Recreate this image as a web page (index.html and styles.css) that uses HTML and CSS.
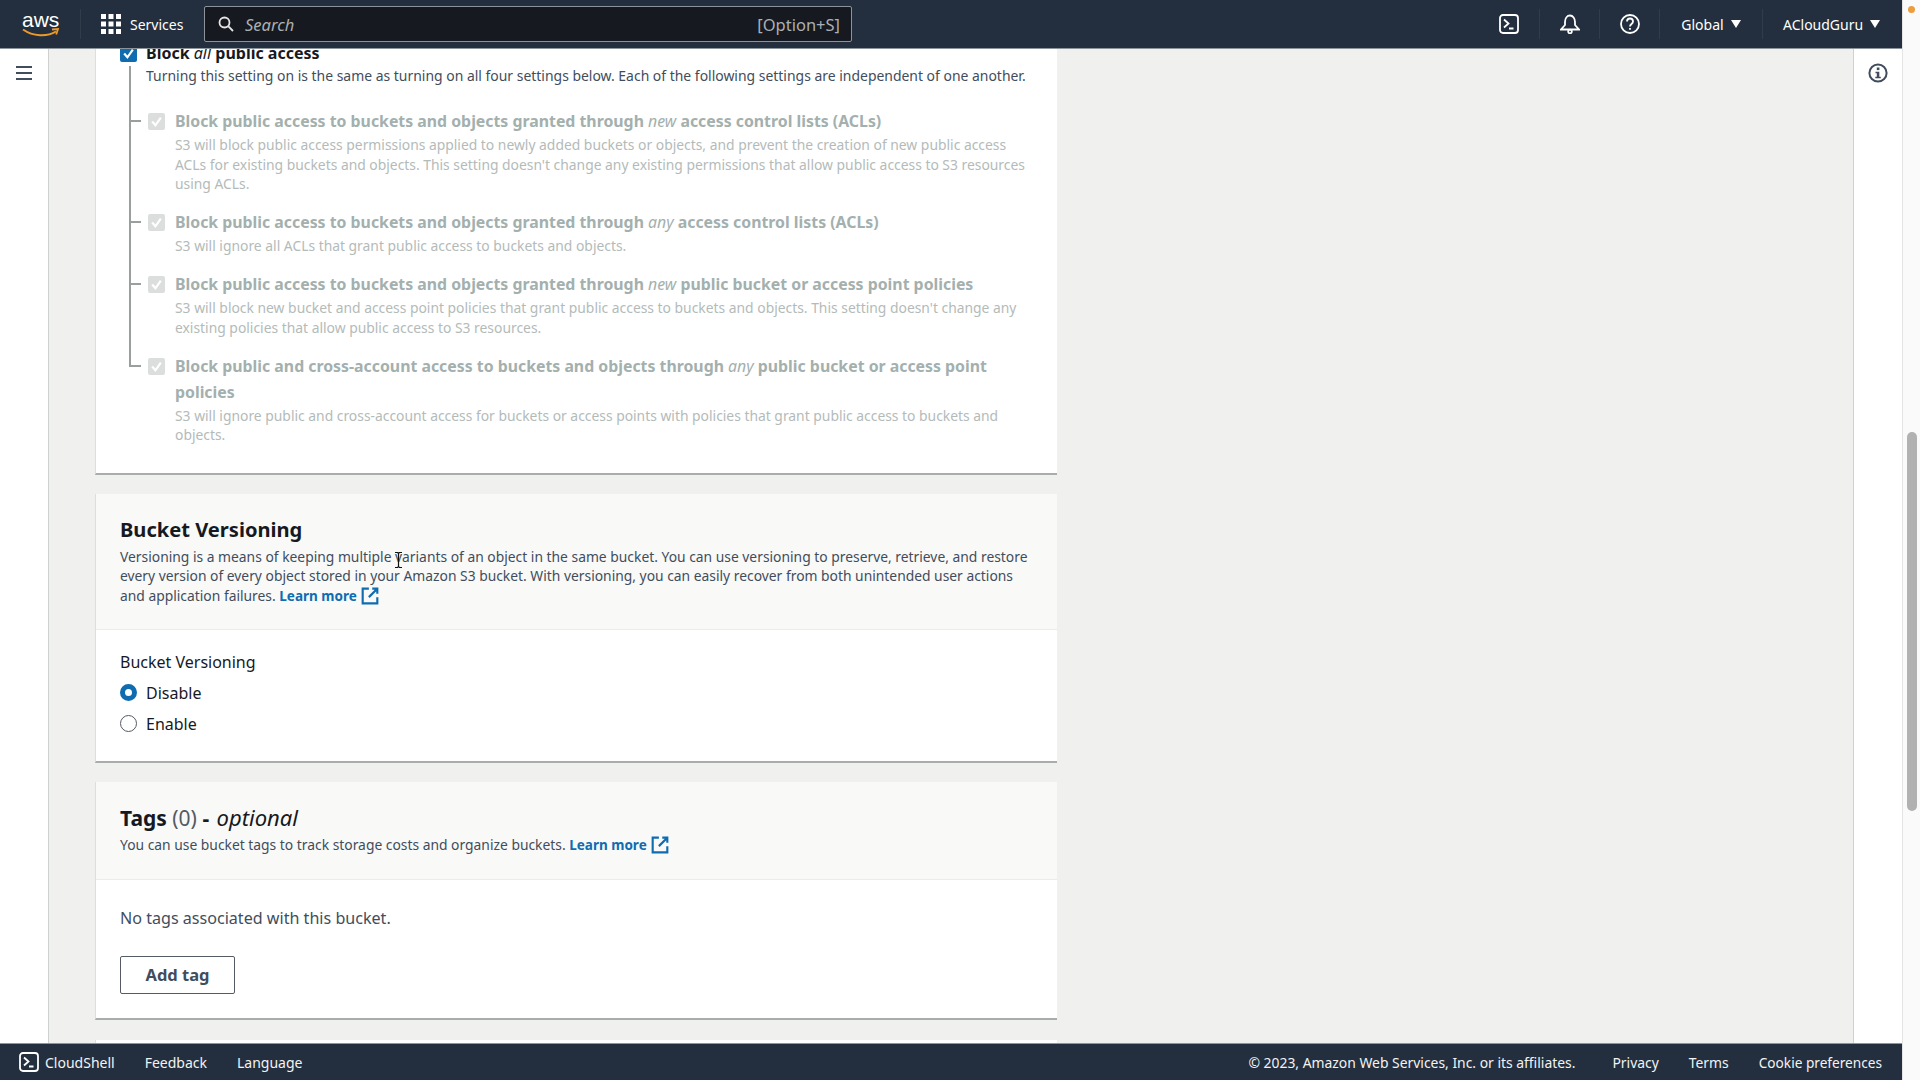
FILE: index.html
```html
<!DOCTYPE html>
<html lang="en">
  <head>
    <meta charset="UTF-8" />
    <title>Create bucket - S3</title>
    <link rel="stylesheet" href="styles.css">
  </head>
  <body>
    <div class="window">
      <div class="app">
        <header class="topbar">
          <div class="logo">
            <span class="logo-text">aws</span>
            <svg class="smile" viewBox="0 0 38 10" width="38" height="10">
              <path d="M1 1.5c10 7 24 7.500 33 2" fill="none" stroke="#ec9a2a" stroke-width="2"/>
              <path d="M30 1.500l6-.5-1.800 5.500" fill="none" stroke="#ec9a2a" stroke-width="1.800"/>
            </svg>
          </div>
          <div class="services">
            <svg viewBox="0 0 20 20" width="20" height="20" fill="#fff">
              <rect x="0" y="0" width="5" height="5"/><rect x="7.500" y="0" width="5" height="5"/><rect x="15" y="0" width="5" height="5"/>
              <rect x="0" y="7.500" width="5" height="5"/><rect x="7.500" y="7.500" width="5" height="5"/><rect x="15" y="7.500" width="5" height="5"/>
              <rect x="0" y="15" width="5" height="5"/><rect x="7.500" y="15" width="5" height="5"/><rect x="15" y="15" width="5" height="5"/>
            </svg>
            <span>Services</span>
          </div>
          <div class="search">
            <svg viewBox="0 0 16 16" width="16" height="16" fill="none" stroke="#e6e6e6" stroke-width="1.800">
              <circle cx="6.500" cy="6.500" r="5"/><path d="M10.200 10.200L15 15"/>
            </svg>
            <span class="search-text">Search</span>
            <span class="search-key">[Option+S]</span>
          </div>
          <div class="top-right">
            <div class="top-item icon-item">
              <svg viewBox="0 0 20 20" width="20" height="20" fill="none" stroke="#fff" stroke-width="1.800">
                <rect x="1" y="1" width="18" height="18" rx="3"/><path d="M5 5.500l4.500 4-4.500 4M10 14.500h4.500"/>
              </svg>
            </div>
            <div class="top-item icon-item">
              <svg viewBox="0 0 20 20" width="20" height="20" fill="none" stroke="#fff" stroke-width="1.800">
                <path d="M1 15.500h18l-4-4.500V8C15 4.500 13 1.500 10 1.500S5 4.500 5 8v3z"/><circle cx="10" cy="17.500" r="1.800"/>
              </svg>
            </div>
            <div class="top-item icon-item">
              <svg viewBox="0 0 20 20" width="20" height="20" fill="none" stroke="#fff" stroke-width="1.800">
                <circle cx="10" cy="10" r="9"/><path d="M7 7.500c0-4 6-4 6 0 0 2.500-3 2.500-3 5"/><path d="M10 14v1.800"/>
              </svg>
            </div>
            <div class="top-item menu-item">Global <span class="caret"></span></div>
            <div class="top-item menu-item last">ACloudGuru <span class="caret"></span></div>
          </div>
        </header>

        <div class="middle">
          <nav class="side-left">
            <svg viewBox="0 0 16 14" width="16" height="14" fill="none" stroke="#414d5c" stroke-width="2">
              <path d="M0 1h16M0 7h16M0 13h16"/>
            </svg>
          </nav>

          <main class="content">
            <section class="card first">
              <div class="check-row top-check">
                <span class="box on">
                  <svg viewBox="0 0 12 12" width="13" height="13" fill="none" stroke="#fff" stroke-width="2"><path d="M2 6l3 3.500L10 2.500"/></svg>
                </span>
                <div class="row-title dark">Block <i>all</i> public access</div>
              </div>

              <div class="tree">
                <div class="row-desc dark-desc lead">Turning this setting on is the same as turning on all four settings below. Each of the following settings are independent of one another.</div>
                <div class="check-row item">
                  <span class="box off">
                    <svg viewBox="0 0 12 12" width="13" height="13" fill="none" stroke="#fff" stroke-width="2"><path d="M2 6l3 3.500L10 2.500"/></svg>
                  </span>
                  <div>
                    <div class="row-title">Block public access to buckets and objects granted through <i>new</i> access control lists (ACLs)</div>
                    <div class="row-desc">S3 will block public access permissions applied to newly added buckets or objects, and prevent the creation of new public access ACLs for existing buckets and objects. This setting doesn't change any existing permissions that allow public access to S3 resources using ACLs.</div>
                  </div>
                </div>
                <div class="check-row item">
                  <span class="box off">
                    <svg viewBox="0 0 12 12" width="13" height="13" fill="none" stroke="#fff" stroke-width="2"><path d="M2 6l3 3.500L10 2.500"/></svg>
                  </span>
                  <div>
                    <div class="row-title">Block public access to buckets and objects granted through <i>any</i> access control lists (ACLs)</div>
                    <div class="row-desc">S3 will ignore all ACLs that grant public access to buckets and objects.</div>
                  </div>
                </div>
                <div class="check-row item">
                  <span class="box off">
                    <svg viewBox="0 0 12 12" width="13" height="13" fill="none" stroke="#fff" stroke-width="2"><path d="M2 6l3 3.500L10 2.500"/></svg>
                  </span>
                  <div>
                    <div class="row-title">Block public access to buckets and objects granted through <i>new</i> public bucket or access point policies</div>
                    <div class="row-desc">S3 will block new bucket and access point policies that grant public access to buckets and objects. This setting doesn't change any existing policies that allow public access to S3 resources.</div>
                  </div>
                </div>
                <div class="check-row item last-item">
                  <span class="box off">
                    <svg viewBox="0 0 12 12" width="13" height="13" fill="none" stroke="#fff" stroke-width="2"><path d="M2 6l3 3.500L10 2.500"/></svg>
                  </span>
                  <div>
                    <div class="row-title">Block public and cross-account access to buckets and objects through <i>any</i> public bucket or access point policies</div>
                    <div class="row-desc">S3 will ignore public and cross-account access for buckets or access points with policies that grant public access to buckets and objects.</div>
                  </div>
                </div>
              </div>
            </section>

            <section class="card versioning-card">
              <div class="card-head compact">
                <h2>Bucket Versioning</h2>
                <p>Versioning is a means of keeping multiple variants of an object in the same bucket. You can use versioning to preserve, retrieve, and restore every version of every object stored in your Amazon S3 bucket. With versioning, you can easily recover from both unintended user actions and application failures. <a class="more">Learn more<svg viewBox="0 0 16 16" width="18" height="18" fill="none" stroke="#0f6cb0" stroke-width="1.900"><path d="M7 1.500H1.500v13h13V9M10 1.500h4.500V6M14.500 1.500L7 9"/></svg></a></p>
              </div>
              <div class="card-body versioning">
                <div class="field-label">Bucket Versioning</div>
                <label class="radio-row"><span class="radio on"></span>Disable</label>
                <label class="radio-row"><span class="radio"></span>Enable</label>
              </div>
            </section>

            <section class="card">
              <div class="card-head tags-head">
                <h2 class="tags-title">Tags <span class="count">(0)</span> - <i class="opt">optional</i></h2>
                <p>You can use bucket tags to track storage costs and organize buckets. <a class="more">Learn more<svg viewBox="0 0 16 16" width="18" height="18" fill="none" stroke="#0f6cb0" stroke-width="1.900"><path d="M7 1.500H1.500v13h13V9M10 1.500h4.500V6M14.500 1.500L7 9"/></svg></a></p>
              </div>
              <div class="card-body tags">
                <div class="empty">No tags associated with this bucket.</div>
                <button class="btn">Add tag</button>
              </div>
            </section>

            <section class="card stub"></section>

            <svg class="ibeam" viewBox="0 0 9 16" width="9" height="16" fill="none" stroke="#111" stroke-width="1.200">
              <path d="M1 .5h2.500l1 1 1-1H8M4.500 1.500v13M1 15.500h2.500l1-1 1 1H8"/>
            </svg>
          </main>

          <aside class="side-right">
            <svg viewBox="0 0 20 20" width="20" height="20">
              <circle cx="10" cy="10" r="8.600" fill="none" stroke="#414d5c" stroke-width="2"/>
              <rect x="8.800" y="4.500" width="2.600" height="2.600" fill="#414d5c"/>
              <path d="M7.500 8.800h3.800v5h1.500v1.500H7.300v-1.500h1.500v-3.500H7.500z" fill="#414d5c"/>
            </svg>
          </aside>
        </div>

        <footer class="footer">
          <div class="foot-left">
            <span class="shell">
              <svg viewBox="0 0 20 20" width="20" height="20" fill="none" stroke="#fff" stroke-width="1.800">
                <rect x="1" y="1" width="18" height="18" rx="3"/><path d="M5 5.500l4.500 4-4.500 4M10 14.500h4.500"/>
              </svg>
              CloudShell
            </span>
            <span>Feedback</span>
            <span>Language</span>
          </div>
          <div class="foot-right">
            <span class="copy">© 2023, Amazon Web Services, Inc. or its affiliates.</span>
            <span>Privacy</span>
            <span>Terms</span>
            <span class="cookie">Cookie preferences</span>
          </div>
        </footer>
      </div>

      <div class="scrollbar">
        <span class="dot"></span>
        <span class="thumb"></span>
      </div>
    </div>
  </body>
</html>
```

FILE: styles.css
```css
* {
  box-sizing: border-box;
}

body {
  margin: 0;
  height: 100vh;
  overflow: hidden;
  background: #f0f0ef;
  color: #16191f;
  font-family: "Noto Sans", "Liberation Sans", sans-serif;
  font-size: 14px;
}

.window {
  display: flex;
  height: 1080px;
}

.app {
  flex: 1;
  min-width: 0;
  display: flex;
  flex-direction: column;
}

/* top bar */
.topbar {
  height: 49px;
  flex: none;
  display: flex;
  align-items: center;
  background: #232f3e;
  color: #fff;
  border-bottom: 1px solid #8d9499;
  position: relative;
  z-index: 2;
}

.logo {
  width: 80px;
  padding-left: 22px;
  display: flex;
  flex-direction: column;
}

.logo-text {
  font-size: 21px;
  line-height: 20px;
  font-family: "Liberation Sans", sans-serif;
}

.smile {
  margin-top: -2px;
}

.services {
  width: 124px;
  height: 30px;
  padding-left: 20px;
  display: flex;
  align-items: center;
  gap: 9px;
  border-left: 1px solid #313c4a;
}

.search {
  width: 648px;
  height: 36px;
  display: flex;
  align-items: center;
  padding: 0 11px 0 13px;
  background: #16191f;
  border: 1px solid #8d9499;
  border-radius: 2px;
  color: #aab0b5;
  font-size: 16.500px;
}

.search-text {
  margin-left: 11px;
  font-style: italic;
  flex: 1;
}

.top-right {
  margin-left: auto;
  padding-right: 9px;
  display: flex;
  align-items: center;
}

.top-item {
  height: 30px;
  display: flex;
  align-items: center;
  justify-content: center;
  border-left: 1px solid #313c4a;
}

.icon-item {
  width: 60px;
}

.icon-item:first-child {
  border-left: 0;
}

.menu-item {
  gap: 7px;
  width: 103px;
}

.menu-item.last {
  width: 131px;
  justify-content: flex-start;
  padding-left: 20px;
}

.caret {
  width: 0;
  height: 0;
  border-left: 5px solid transparent;
  border-right: 5px solid transparent;
  border-top: 8px solid #fff;
}

/* middle */
.middle {
  flex: 1;
  min-height: 0;
  display: flex;
}

.side-left {
  width: 49px;
  flex: none;
  background: #fff;
  border-right: 1px solid #cfd1d1;
  padding: 16px 0 0 16px;
}

.side-right {
  width: 49px;
  flex: none;
  background: #fff;
  border-left: 1px solid #cfd1d1;
  padding: 14px 0 0 14px;
}

.content {
  flex: 1;
  min-width: 0;
  overflow: hidden;
  position: relative;
  padding-left: 46px;
}

/* cards */
.card {
  width: 962px;
  background: #fff;
  border-left: 1px solid #dedede;
  border-bottom: 2px solid #a9acac;
  margin-bottom: 20px;
}

.card.first {
  padding: 0 23px 28px 24px;
  margin-top: -7px;
  margin-bottom: 19px;
}

.versioning-card {
  margin-bottom: 19px;
}

.card.stub {
  height: 30px;
  border-bottom: 0;
}

.check-row {
  display: flex;
  gap: 10px;
}

.box {
  width: 17px;
  height: 17px;
  flex: none;
  border-radius: 2px;
  display: flex;
  align-items: center;
  justify-content: center;
  margin-top: 5px;
}

.top-check {
  gap: 9px;
}

.top-check .box {
  margin-top: 3px;
}

.box.on {
  background: #0f6cb0;
}

.box.off {
  background: #dcdedd;
}

.row-title {
  font-weight: 700;
  font-size: 15.850px;
  line-height: 26px;
  color: #a3b0ae;
}

.row-title i {
  font-weight: 400;
}

.row-title.dark {
  color: #16191f;
  font-size: 16px;
  line-height: 22px;
}

.row-desc {
  margin-top: 1px;
  font-size: 13.870px;
  line-height: 19.300px;
  color: #b3bbb9;
}

.row-desc.dark-desc {
  color: #414d5c;
}

.row-desc.lead {
  margin: -3px 0 23px -2px;
  font-size: 13.950px;
  white-space: nowrap;
}

.tree {
  margin: 5px 0 0 9px;
  padding-left: 17px;
  border-left: 2px solid #9a9e9e;
}

.item {
  position: relative;
  margin-bottom: 16px;
}

.item::before {
  content: "";
  position: absolute;
  left: -17px;
  top: 12px;
  width: 10px;
  height: 2px;
  background: #9a9e9e;
}

.last-item {
  margin-bottom: 0;
}

.last-item::after {
  content: "";
  position: absolute;
  left: -19px;
  top: 14px;
  bottom: 0;
  width: 2px;
  background: #fff;
}

.card-head {
  padding: 23px 24px 24px;
  background: #f9f9f8;
  border-bottom: 1px solid #ececec;
}

.card-head.compact {
  padding-bottom: 23px;
}

.card-head.tags-head {
  padding-top: 22px;
  padding-bottom: 23px;
}

.card-head h2 {
  margin: 0;
  font-size: 20.100px;
  line-height: 26px;
  font-weight: 700;
  color: #16191f;
}

.card-head .tags-title {
  font-size: 21px;
}

.card-head .count {
  font-weight: 400;
  color: #545b64;
}

.card-head .opt {
  font-weight: 400;
  font-size: 22px;
  margin-left: 2px;
}

.card-head p {
  margin: 4px 0 0;
  font-size: 13.850px;
  line-height: 19.500px;
  color: #414d5c;
}

.more {
  color: #0f6cb0;
  font-weight: 700;
  font-size: 13.500px;
}

.more svg {
  vertical-align: -4px;
  margin-left: 4px;
}

.card-body {
  padding: 21px 24px;
}

.versioning {
  height: 131px;
}

.field-label {
  font-size: 16px;
  line-height: 22px;
  margin-bottom: 4px;
}

.radio-row {
  display: flex;
  align-items: center;
  gap: 9px;
  height: 31px;
  font-size: 16px;
}

.radio {
  width: 17px;
  height: 17px;
  border: 1px solid #545b64;
  border-radius: 50%;
  background: #fff;
}

.radio.on {
  border: 5px solid #0f6cb0;
}

.tags {
  height: 138px;
  padding-top: 26px;
}

.empty {
  font-size: 16.100px;
  line-height: 24px;
  color: #414d5c;
}

.btn {
  display: block;
  margin-top: 26px;
  width: 115px;
  height: 38px;
  background: #fff;
  border: 1px solid #545b64;
  border-radius: 2px;
  color: #414d5c;
  font: 700 16.500px "Noto Sans", "Liberation Sans", sans-serif;
}

.ibeam {
  position: absolute;
  left: 345px;
  top: 503px;
}

/* footer */
.footer {
  height: 37px;
  flex: none;
  display: flex;
  justify-content: space-between;
  align-items: center;
  background: #232f3e;
  border-top: 1px solid #8d9499;
  color: #f2f3f3;
  padding: 0 20px 0 19px;
  position: relative;
  z-index: 2;
}

.foot-left,
.foot-right {
  display: flex;
  align-items: center;
}

.foot-left {
  gap: 30px;
}

.foot-right {
  gap: 30px;
  font-size: 13.900px;
}

.cookie {
  font-size: 13.650px;
}

.shell {
  display: flex;
  align-items: center;
  gap: 6px;
}

.copy {
  margin-right: 7px;
}

/* scrollbar */
.scrollbar {
  width: 18px;
  flex: none;
  background: #fafafa;
  border-left: 1px solid #e4e4e4;
  position: relative;
}

.dot {
  position: absolute;
  left: 5px;
  top: 6px;
  width: 7px;
  height: 7px;
  border-radius: 50%;
  background: #eb9d3f;
}

.thumb {
  position: absolute;
  left: 4px;
  top: 432px;
  width: 10px;
  height: 379px;
  border-radius: 5px;
  background: #b1b1b1;
}
```
